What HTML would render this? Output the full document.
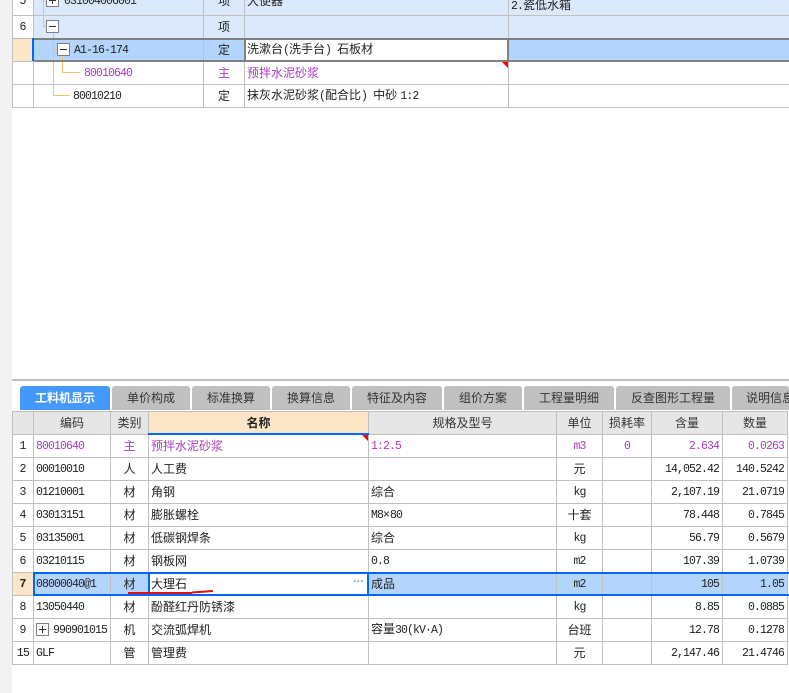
<!DOCTYPE html>
<html><head><meta charset="utf-8">
<style>
html,body{margin:0;padding:0;background:#fff}
#p{position:relative;width:789px;height:693px;overflow:hidden;background:#fff;font:12px "Liberation Sans","WenQuanYi Zen Hei","Noto Sans CJK SC",sans-serif;color:#222}
#p div{position:absolute}
table{position:absolute;border-collapse:collapse;table-layout:fixed;font-size:12px}
td{border:1px solid #c0c0c0;height:23px;padding:0 2px;white-space:nowrap;overflow:hidden;line-height:14px;box-sizing:border-box}
tr{height:23px}
.c{text-align:center;padding:0}
.r{text-align:right;padding:0 3px 0 0}
.m{font-family:"Liberation Mono","WenQuanYi Zen Hei",monospace;font-size:11.5px;letter-spacing:-.9px;padding-top:2px}
.n{font-family:"Liberation Mono",monospace;font-size:11.5px;letter-spacing:-.9px;padding-top:2px}
.p,.p td{color:#a83cbc}
.b{background:#dce9fd}
.s{background:#b3d4fd}
.w{background:#fff}
.o{background:#fde6c8}
.h td{background:#e6e6e6;text-align:center;padding:0;color:#333}
td.act{background:#fde6c8;font-weight:bold;color:#222}
.tab{top:386px;height:24px;background:#c0c0c0;border-radius:3px 3px 0 0;text-align:center;line-height:25px;color:#333;font-size:12px;white-space:nowrap;overflow:hidden}
.box{width:11px;height:11px;border:1px solid #808080;background:#fff}
.box:before{content:"";position:absolute;left:2px;top:5px;width:7px;height:1px;background:#333}
.plus:after{content:"";position:absolute;left:5px;top:2px;width:1px;height:7px;background:#333}
.tl{background:#fbbd68}
.bl{background:#0066ff}
.gl{background:#808080}
</style></head><body>
<div id="p">
<div style="left:0;top:0;width:12px;height:693px;background:#f2f2f2"></div>

<table style="left:12px;top:-15px;width:777px">
<colgroup><col style="width:21px"><col style="width:170px"><col style="width:41px"><col style="width:264px"><col style="width:281px"></colgroup>
<tr class="b" style="height:30px"><td class="w c n" style="height:30px;letter-spacing:0">5</td><td class="m" style="padding-left:30px">031004006001</td><td class="c">项</td><td>大便器</td><td style="padding-top:10px"><span class="n">2.</span>瓷低水箱</td></tr>
<tr class="b"><td class="w c n" style="letter-spacing:0">6</td><td></td><td class="c">项</td><td></td><td></td></tr>
<tr class="s"><td class="o"></td><td class="m" style="padding-left:40px">A1-16-174</td><td class="c">定</td><td class="w">洗漱台<span class="n">(</span>洗手台<span class="n">) </span>石板材</td><td></td></tr>
<tr class="p"><td></td><td class="m" style="padding-left:50px">80010640</td><td class="c">主</td><td>预拌水泥砂浆</td><td></td></tr>
<tr><td></td><td class="m" style="padding-left:39px">80010210</td><td class="c">定</td><td>抹灰水泥砂浆<span class="n">(</span>配合比<span class="n">) </span>中砂 <span class="n">1:2</span></td><td></td></tr>
</table>

<div class="tl" style="left:43px;top:0;width:1px;height:27px"></div>
<div class="tl" style="left:43px;top:26px;width:4px;height:1px"></div>
<div class="tl" style="left:53px;top:33px;width:1px;height:63px"></div>
<div class="tl" style="left:53px;top:49px;width:5px;height:1px"></div>
<div class="tl" style="left:53px;top:95px;width:17px;height:1px"></div>
<div class="tl" style="left:62px;top:55px;width:1px;height:17px"></div>
<div class="tl" style="left:62px;top:72px;width:18px;height:1px"></div>
<div class="box plus" style="left:46px;top:-6px"></div>
<div class="box" style="left:46px;top:20px"></div>
<div class="box" style="left:57px;top:43px"></div>

<div class="gl" style="left:34px;top:38px;width:755px;height:2px"></div>
<div class="gl" style="left:34px;top:60px;width:755px;height:2px"></div>
<div class="gl" style="left:244px;top:38px;width:2px;height:24px"></div>
<div class="gl" style="left:507px;top:38px;width:2px;height:24px"></div>
<div class="bl" style="left:32px;top:38px;width:2px;height:23px"></div>
<svg style="position:absolute;left:500px;top:61px" width="9" height="8"><path d="M2 1H8V7Z" fill="#f00"/></svg>

<div style="left:12px;top:379px;width:777px;height:2px;background:#c0c0c0"></div>
<div class="tab" style="left:20px;width:90px;background:#4499ff;color:#fff;font-weight:bold">工料机显示</div>
<div class="tab" style="left:112px;width:78px">单价构成</div>
<div class="tab" style="left:192px;width:78px">标准换算</div>
<div class="tab" style="left:272px;width:78px">换算信息</div>
<div class="tab" style="left:352px;width:90px">特征及内容</div>
<div class="tab" style="left:444px;width:78px">组价方案</div>
<div class="tab" style="left:524px;width:90px">工程量明细</div>
<div class="tab" style="left:616px;width:114px">反查图形工程量</div>
<div class="tab" style="left:732px;width:57px;text-align:left;padding-left:14px;box-sizing:border-box">说明信息</div>

<table style="left:12px;top:411px;width:775px">
<colgroup><col style="width:21px"><col style="width:77px"><col style="width:38px"><col style="width:220px"><col style="width:188px"><col style="width:46px"><col style="width:49px"><col style="width:71px"><col style="width:65px"></colgroup>
<tr class="h"><td></td><td>编码</td><td>类别</td><td class="act">名称</td><td>规格及型号</td><td>单位</td><td>损耗率</td><td>含量</td><td>数量</td></tr>
<tr class="p"><td class="c n" style="color:#222;letter-spacing:0">1</td><td class="m">80010640</td><td class="c">主</td><td>预拌水泥砂浆</td><td class="m">1:2.5</td><td class="c m">m3</td><td class="c m">0</td><td class="r m">2.634</td><td class="r m">0.0263</td></tr>
<tr><td class="c n" style="letter-spacing:0">2</td><td class="m">00010010</td><td class="c">人</td><td>人工费</td><td></td><td class="c">元</td><td></td><td class="r m">14,052.42</td><td class="r m">140.5242</td></tr>
<tr><td class="c n" style="letter-spacing:0">3</td><td class="m">01210001</td><td class="c">材</td><td>角钢</td><td>综合</td><td class="c m">kg</td><td></td><td class="r m">2,107.19</td><td class="r m">21.0719</td></tr>
<tr><td class="c n" style="letter-spacing:0">4</td><td class="m">03013151</td><td class="c">材</td><td>膨胀螺栓</td><td><span class="n">M8</span>×<span class="n">80</span></td><td class="c">十套</td><td></td><td class="r m">78.448</td><td class="r m">0.7845</td></tr>
<tr><td class="c n" style="letter-spacing:0">5</td><td class="m">03135001</td><td class="c">材</td><td>低碳钢焊条</td><td>综合</td><td class="c m">kg</td><td></td><td class="r m">56.79</td><td class="r m">0.5679</td></tr>
<tr><td class="c n" style="letter-spacing:0">6</td><td class="m">03210115</td><td class="c">材</td><td>钢板网</td><td class="m">0.8</td><td class="c m">m2</td><td></td><td class="r m">107.39</td><td class="r m">1.0739</td></tr>
<tr class="s"><td class="c o n" style="font-weight:bold;letter-spacing:0">7</td><td class="m">08000040@1</td><td class="c">材</td><td class="w">大理石</td><td>成品</td><td class="c m">m2</td><td></td><td class="r m">105</td><td class="r m">1.05</td></tr>
<tr><td class="c n" style="letter-spacing:0">8</td><td class="m">13050440</td><td class="c">材</td><td>酚醛红丹防锈漆</td><td></td><td class="c m">kg</td><td></td><td class="r m">8.85</td><td class="r m">0.0885</td></tr>
<tr><td class="c n" style="letter-spacing:0">9</td><td class="m" style="padding-left:19px">990901015</td><td class="c">机</td><td>交流弧焊机</td><td>容量<span class="n">30(kV·A)</span></td><td class="c">台班</td><td></td><td class="r m">12.78</td><td class="r m">0.1278</td></tr>
<tr><td class="c n" style="letter-spacing:-.6px">15</td><td class="m">GLF</td><td class="c">管</td><td>管理费</td><td></td><td class="c">元</td><td></td><td class="r m">2,147.46</td><td class="r m">21.4746</td></tr>
</table>

<div class="bl" style="left:148px;top:433px;width:221px;height:2px"></div>
<svg style="position:absolute;left:361px;top:434px" width="9" height="8"><path d="M1 1H7V7Z" fill="#f00"/></svg>

<div class="bl" style="left:33px;top:572px;width:756px;height:2px"></div>
<div class="bl" style="left:33px;top:594px;width:756px;height:2px"></div>
<div class="bl" style="left:33px;top:572px;width:2px;height:24px"></div>
<div class="bl" style="left:148px;top:572px;width:2px;height:24px"></div>
<div class="bl" style="left:367px;top:572px;width:2px;height:24px"></div>
<div style="left:353px;top:576px;color:#5b9bd0;font-weight:bold;font-size:11px;line-height:12px;letter-spacing:0">···</div>
<svg style="position:absolute;left:125px;top:588px" width="92" height="10"><path d="M3 5H67M67 4.5L88 3" stroke="#e01010" stroke-width="2" fill="none"/></svg>
<div class="box plus" style="left:36px;top:623px;width:11px;height:11px"></div>
</div>
</body></html>
